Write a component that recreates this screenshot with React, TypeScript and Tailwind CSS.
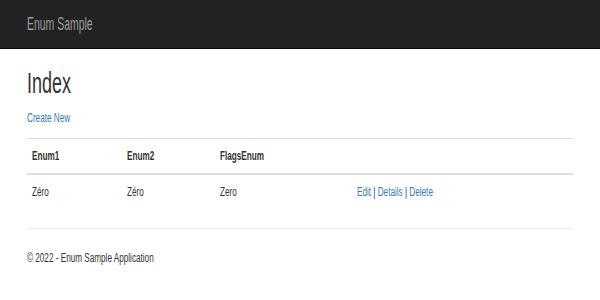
export default function App() {
  const sq = "inline-block origin-left scale-x-[0.68] whitespace-nowrap";
  return (
    <div className="min-h-[300px] w-[600px] bg-white font-['Liberation_Sans',Arial,sans-serif] text-[#333]">
      <nav className="flex h-[49px] items-center border-b border-[#080808] bg-[#222] px-[27px]">
        <span className="inline-block origin-left scale-x-[0.58] whitespace-nowrap text-[18px] leading-[20px] text-[#9d9d9d]">
          Enum Sample
        </span>
      </nav>
      <main className="px-[27px]">
        <h2 className="mt-[18px] text-[29px] leading-[32px]">
          <span className="inline-block origin-left scale-x-[0.62] whitespace-nowrap">Index</span>
        </h2>
        <p className="mt-[11px] text-[12px] leading-[16px]">
          <a className={`${sq} text-[#337ab7]`} href="#">
            Create New
          </a>
        </p>
        <table className="mt-[12px] w-full table-fixed border-collapse text-[12px] leading-[16px]">
          <colgroup>
            <col className="w-[95px]" />
            <col className="w-[93px]" />
            <col className="w-[137px]" />
            <col />
          </colgroup>
          <thead>
            <tr className="border-t border-[#ddd] border-b-2">
              <th className="py-[9px] pl-[5px] text-left font-bold">
                <span className={sq}>Enum1</span>
              </th>
              <th className="py-[9px] pl-[5px] text-left font-bold">
                <span className={sq}>Enum2</span>
              </th>
              <th className="py-[9px] pl-[5px] text-left font-bold">
                <span className={sq}>FlagsEnum</span>
              </th>
              <th className="py-[9px] pl-[5px]"></th>
            </tr>
          </thead>
          <tbody>
            <tr>
              <td className="py-[9px] pl-[5px]">
                <span className={sq}>Zéro</span>
              </td>
              <td className="py-[9px] pl-[5px]">
                <span className={sq}>Zéro</span>
              </td>
              <td className="py-[9px] pl-[5px]">
                <span className={sq}>Zero</span>
              </td>
              <td className="py-[9px] pl-[5px]">
                <span className={sq}>
                  <a className="text-[#337ab7]" href="#">Edit</a> |{" "}
                  <a className="text-[#337ab7]" href="#">Details</a> |{" "}
                  <a className="text-[#337ab7]" href="#">Delete</a>
                </span>
              </td>
            </tr>
          </tbody>
        </table>
        <hr className="mt-[19px] border-t border-[#eee]" />
        <footer className="mt-[21px] text-[12px] leading-[16px]">
          <span className={sq}>© 2022 - Enum Sample Application</span>
        </footer>
      </main>
    </div>
  );
}
